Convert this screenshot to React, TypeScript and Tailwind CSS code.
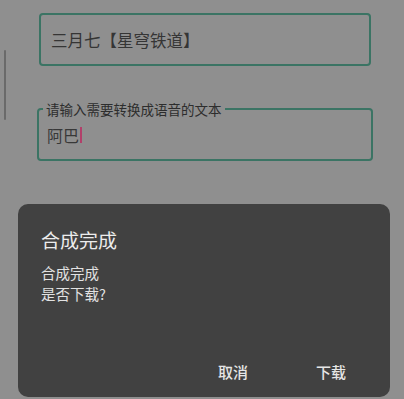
export default function App() {
  const font = { fontFamily: '"Noto Sans CJK SC", "Noto Sans", sans-serif' };

  return (
    <div className="relative w-[404px] h-[399px] overflow-hidden bg-[#8f8f8f]" style={font}>
      {/* scroll indicator */}
      <div className="absolute left-[4px] top-[50px] w-[2px] h-[70px] rounded-full bg-[#6a6a6a]" />

      <div className="flex flex-col pt-[13px]">
        {/* name field */}
        <div className="ml-[39px] w-[332px] h-[53px] flex items-center pl-[10px] border-2 border-[#3b7464] rounded-[4px]">
          <span className="text-[16.5px] leading-[20px] text-[#353535]">三月七【星穹铁道】</span>
        </div>

        {/* text field with floating label */}
        <fieldset className="ml-[37px] mt-[35px] w-[336px] px-[4px] pb-0 border-2 border-[#3b7464] rounded-[4px]">
          <legend className="px-[3px] text-[13.5px] leading-[16px] text-[#2d2d2d]">请输入需要转换成语音的文本</legend>
          <div className="h-[42px] pl-[4px] pt-[8px] flex items-start">
            <span className="text-[16px] leading-[20px] text-[#383838]">阿巴</span>
            <span className="mt-[2px] ml-[1px] w-[2px] h-[16px] bg-[#b2406a]" />
          </div>
        </fieldset>
      </div>

      {/* dialog */}
      <div className="absolute left-[18px] top-[204px] w-[372px] h-[193px] rounded-[10px] bg-[#414141] flex flex-col">
        <div className="pl-[23px] pt-[24px] text-[19px] leading-[24px] text-[#ececec]">合成完成</div>
        <div className="pl-[23px] mt-[10px] text-[14.5px] leading-[21px] text-[#e2e2e2]">
          <div>合成完成</div>
          <div>是否下载?</div>
        </div>
        <div className="mt-auto flex justify-end gap-[68px] pr-[44px] pb-[15px] text-[15px] leading-[20px] text-[#e6e6e6]">
          <button className="font-medium">取消</button>
          <button className="font-medium">下载</button>
        </div>
      </div>
    </div>
  );
}
